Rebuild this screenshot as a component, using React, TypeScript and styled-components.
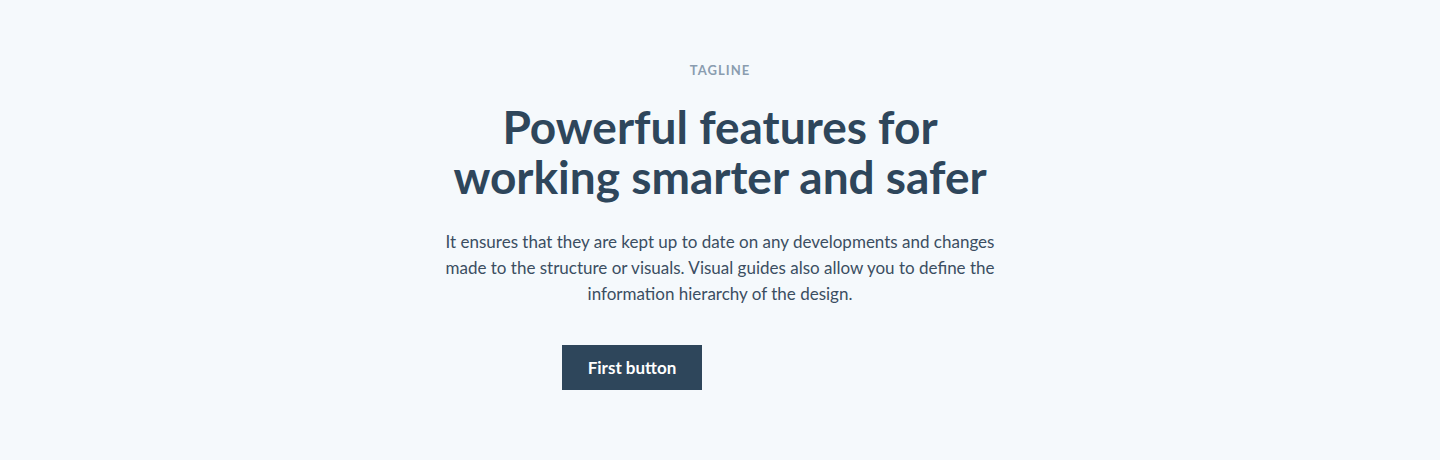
import React from "react";
import styled, { createGlobalStyle } from "styled-components";

const GlobalStyle = createGlobalStyle`
  html, body {
    margin: 0;
    padding: 0;
    background: #f5f9fc;
    font-family: Lato, "Noto Sans", sans-serif;
  }
`;

const Section = styled.section`
  height: 460px;
  box-sizing: border-box;
  padding-top: 61px;
  display: flex;
  flex-direction: column;
  align-items: center;
  background: #f5f9fc;
`;

const Tagline = styled.div`
  font-size: 13px;
  font-weight: 700;
  letter-spacing: 0.08em;
  text-transform: uppercase;
  color: #8a9db0;
  line-height: 18px;
`;

const Heading = styled.h1`
  margin: 23px 0 0;
  font-size: 46px;
  font-weight: 700;
  line-height: 50px;
  color: #2e465b;
  text-align: center;
`;

const Lead = styled.p`
  margin: 27px 0 0;
  width: 560px;
  font-size: 17px;
  line-height: 26px;
  color: #3b4e62;
  text-align: center;
`;

const ButtonRow = styled.div`
  margin-top: 38px;
  display: flex;
  gap: 16px;
`;

const Button = styled.button<{ $ghost?: boolean }>`
  height: 45px;
  width: ${(p) => (p.$ghost ? "160px" : "140px")};
  border: none;
  border-radius: 0;
  font-family: inherit;
  font-size: 17px;
  font-weight: 700;
  color: #fff;
  background: #2e465b;
  cursor: pointer;
  visibility: ${(p) => (p.$ghost ? "hidden" : "visible")};
`;

export default function App() {
  return (
    <>
      <GlobalStyle />
      <Section>
        <Tagline>Tagline</Tagline>
        <Heading>
          Powerful features for
          <br />
          working smarter and safer
        </Heading>
        <Lead>
          It ensures that they are kept up to date on any developments and
          changes made to the structure or visuals. Visual guides also allow you
          to define the information hierarchy of the design.
        </Lead>
        <ButtonRow>
          <Button>First button</Button>
          <Button $ghost aria-hidden>
            Second button
          </Button>
        </ButtonRow>
      </Section>
    </>
  );
}
